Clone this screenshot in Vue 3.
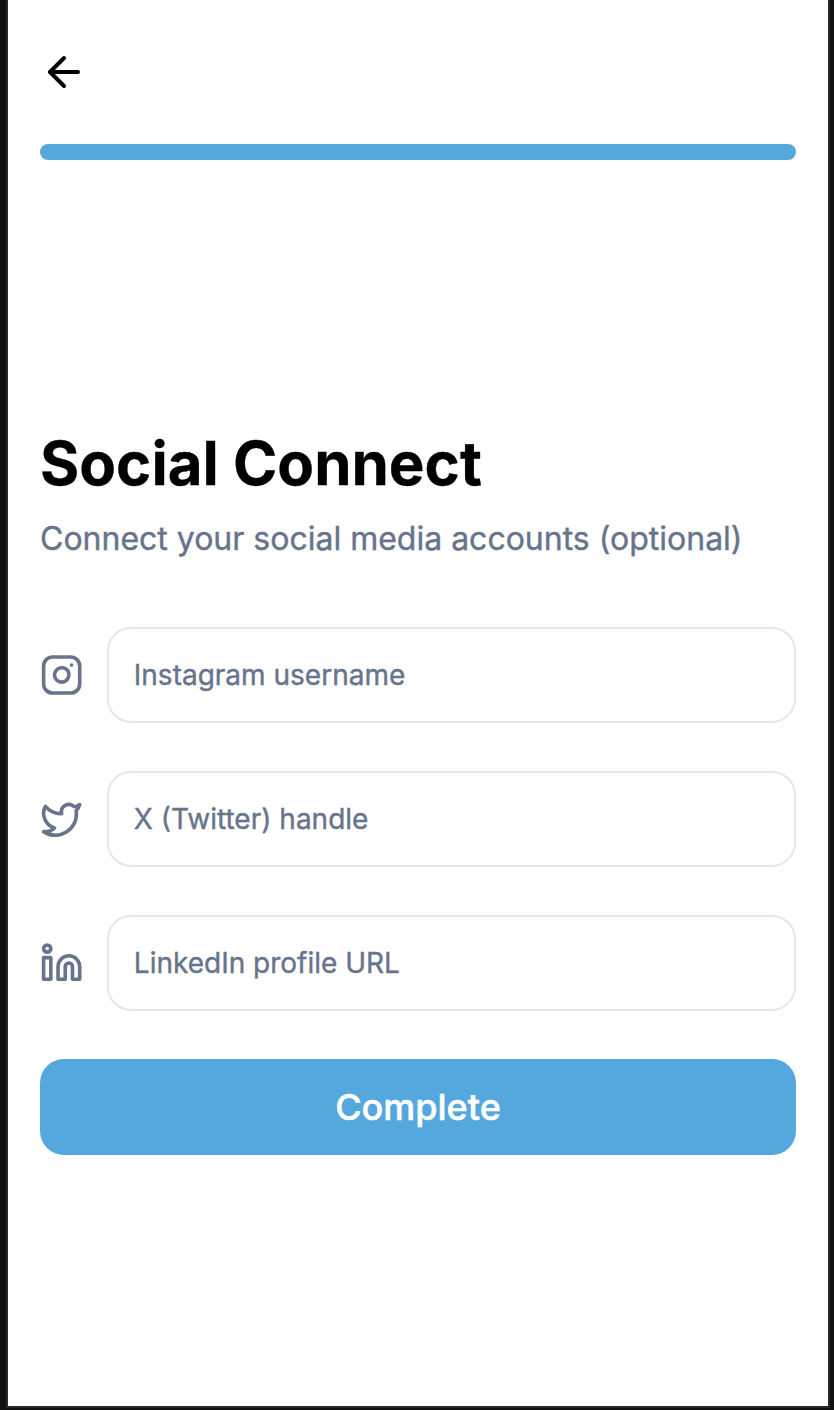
<script setup>
const fields = [
  { icon: 'instagram', placeholder: 'Instagram username' },
  { icon: 'twitter', placeholder: 'X (Twitter) handle' },
  { icon: 'linkedin', placeholder: 'LinkedIn profile URL' },
]
</script>

<template>
  <div class="frame">
    <main class="screen">
      <button class="back" aria-label="Back">
        <svg viewBox="0 0 24 24"><path d="m12 19-7-7 7-7" /><path d="M19 12H5" /></svg>
      </button>
      <div class="progress"></div>
      <section class="content">
        <h1>Social Connect</h1>
        <p>Connect your social media accounts (optional)</p>
        <form @submit.prevent>
          <label v-for="f in fields" :key="f.icon" class="row">
            <svg v-if="f.icon === 'instagram'" class="icon" viewBox="0 0 24 24">
              <rect x="2" y="2" width="20" height="20" rx="5" />
              <path d="M16 11.37A4 4 0 1 1 12.63 8 4 4 0 0 1 16 11.37z" />
              <path d="M17.5 6.5h.01" />
            </svg>
            <svg v-else-if="f.icon === 'twitter'" class="icon" viewBox="0 0 24 24">
              <path d="M22 4s-.7 2.1-2 3.4c1.6 10-9.4 17.3-18 11.6 2.2.1 4.4-.6 6-2C3 15.5.5 9.6 3 5c2.2 2.6 5.6 4.1 9 4-.9-4.2 4-6.6 7-3.8 1.1 0 3-1.2 3-1.2z" />
            </svg>
            <svg v-else class="icon" viewBox="0 0 24 24">
              <path d="M16 8a6 6 0 0 1 6 6v7h-4v-7a2 2 0 0 0-4 0v7h-4v-7a6 6 0 0 1 6-6z" />
              <rect x="2" y="9" width="4" height="12" />
              <circle cx="4" cy="4" r="2" />
            </svg>
            <input type="text" :placeholder="f.placeholder" />
          </label>
          <button class="submit">Complete</button>
        </form>
      </section>
    </main>
  </div>
</template>

<style>
body { background: #0b0b0c; }
</style>

<style scoped>
.frame {
  box-sizing: border-box;
  height: 1410px;
  padding: 0 4px 2px 6px;
  background: #101010;
  font-family: Inter, "Liberation Sans", sans-serif;
}
.screen {
  box-sizing: border-box;
  height: 1408px;
  padding: 48px 32px 0;
  border: 2px solid #28282b;
  border-top: 0;
  background: #fff;
}
.back {
  display: block;
  width: 48px;
  height: 48px;
  padding: 0;
  border: 0;
  background: none;
}
svg {
  display: block;
  fill: none;
  stroke: #000;
  stroke-width: 2;
  stroke-linecap: round;
  stroke-linejoin: round;
}
.back svg { width: 48px; height: 48px; }
.progress {
  height: 16px;
  margin-top: 48px;
  border-radius: 8px;
  background: #55a8dd;
}
.content { padding-top: 267px; }
h1 {
  margin: 0;
  font-size: 60px;
  line-height: 72px;
  font-weight: 700;
  color: #000;
  white-space: nowrap;
  -webkit-text-stroke: 0.3px currentColor;
}
p {
  margin: 16px 0 0;
  font-size: 32px;
  line-height: 48px;
  color: #67748c;
  white-space: nowrap;
  -webkit-text-stroke: 0.4px currentColor;
}
form {
  display: flex;
  flex-direction: column;
  gap: 48px;
  margin-top: 64px;
}
.row { display: flex; align-items: center; gap: 24px; }
.icon { flex: none; width: 43.3px; height: 48px; stroke: #67748c; }
input {
  box-sizing: border-box;
  flex: 1;
  min-width: 0;
  height: 96px;
  padding: 0 24px 0 24.5px;
  border: 2px solid #e3e7ee;
  border-radius: 24px;
  background: #fff;
  font: 400 28px Inter, "Liberation Sans", sans-serif;
}
input::placeholder { color: #67748c; opacity: 1; -webkit-text-stroke: 0.4px #67748c; }
.submit {
  height: 96px;
  border: 0;
  border-radius: 24px;
  background: #55a8dd;
  color: #fff;
  font: 500 36px Inter, "Liberation Sans", sans-serif;
  -webkit-text-stroke: 0.5px currentColor;
}
</style>
